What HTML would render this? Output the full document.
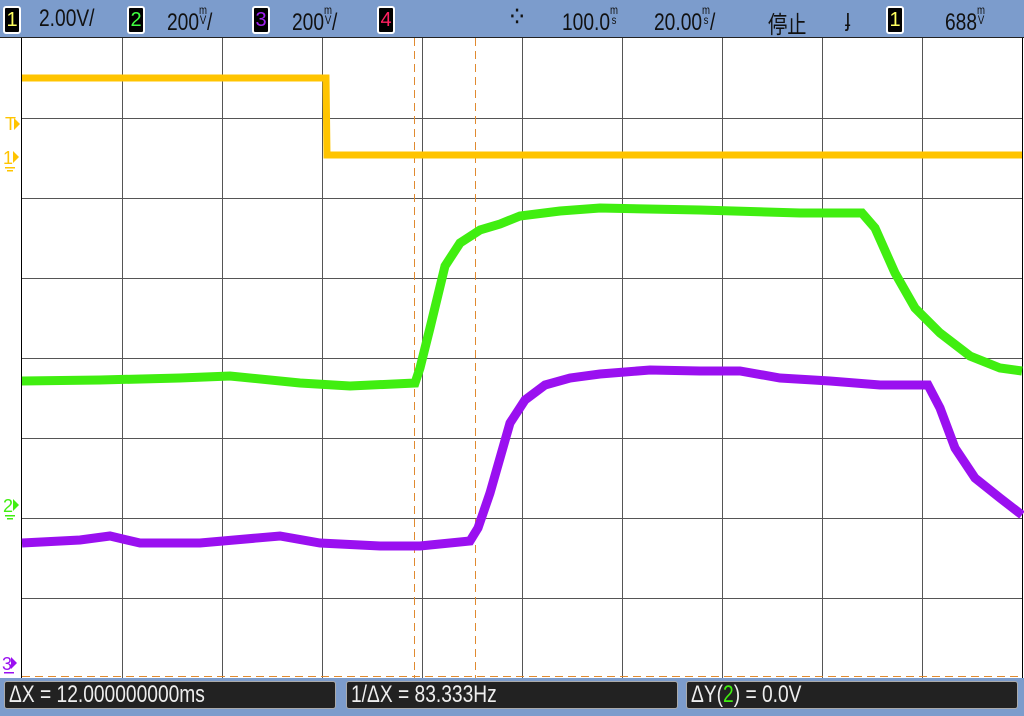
<!DOCTYPE html><html><head><meta charset="utf-8"><style>
body{margin:0;width:1024px;height:716px;overflow:hidden;background:#fff;font-family:"Liberation Sans","Noto Sans CJK JP",sans-serif}
.top{position:absolute;left:0;top:0;width:1024px;height:37px;background:#7c9ccc;border-bottom:1px solid #222}
.t{position:absolute;top:5px;font-size:24px;color:#111;transform:scaleX(.8);transform-origin:left;white-space:nowrap}
.t small{font-size:12px;display:inline-block;line-height:10px;vertical-align:6px;text-align:center}
.b{position:absolute;top:6px;width:14px;height:24px;background:#000;border:2px solid #fff;border-radius:3px;font-size:20px;text-align:center;line-height:24px}
.bot{position:absolute;left:0;top:678px;width:1024px;height:38px;background:#7c9ccc}
.box{position:absolute;top:3px;height:26px;background:#222;border:1px solid #aaa;border-radius:3px;color:#eee;font-size:24px;line-height:26px;padding-left:4px}
.box span{display:inline-block;transform:scaleX(.8);transform-origin:left;white-space:nowrap}
</style></head><body>
<div class="top">
<div class="b" style="left:3px;color:#ffff60">1</div><div class="t" style="left:39px">2.00V/</div>
<div class="b" style="left:127px;color:#40ff40">2</div><div class="t" style="left:167px">200<small>m<br>V</small>/</div>
<div class="b" style="left:252px;color:#a020f0">3</div><div class="t" style="left:292px">200<small>m<br>V</small>/</div>
<div class="b" style="left:377px;color:#ff2060">4</div>
<div class="t" style="left:507px;top:0px;font-size:30px">⁘</div>
<div class="t" style="left:562px">100.0<small>m<br>s</small></div>
<div class="t" style="left:654px">20.00<small>m<br>s</small>/</div>
<div class="t" style="left:768px">停止</div>
<div class="t" style="left:845px">ɟ</div>
<div class="b" style="left:886px;color:#ffff60">1</div>
<div class="t" style="left:945px">688<small>m<br>V</small></div>
</div>
<svg style="position:absolute;left:0;top:38px" width="1024" height="640">
<g stroke="#555" stroke-width="1">
<line x1="21.5" y1="0" x2="21.5" y2="640" stroke="#000"/>
<line x1="122.5" y1="0" x2="122.5" y2="640"/><line x1="222.5" y1="0" x2="222.5" y2="640"/><line x1="322.5" y1="0" x2="322.5" y2="640"/><line x1="422.5" y1="0" x2="422.5" y2="640"/><line x1="522.5" y1="0" x2="522.5" y2="640"/><line x1="622.5" y1="0" x2="622.5" y2="640"/><line x1="722.5" y1="0" x2="722.5" y2="640"/><line x1="822.5" y1="0" x2="822.5" y2="640"/><line x1="922.5" y1="0" x2="922.5" y2="640"/><line x1="1022.5" y1="0" x2="1022.5" y2="640" stroke="#000"/>
<line x1="22" y1="80.5" x2="1022" y2="80.5"/><line x1="22" y1="160.5" x2="1022" y2="160.5"/><line x1="22" y1="240.5" x2="1022" y2="240.5"/><line x1="22" y1="320.5" x2="1022" y2="320.5"/><line x1="22" y1="400.5" x2="1022" y2="400.5"/><line x1="22" y1="480.5" x2="1022" y2="480.5"/><line x1="22" y1="560.5" x2="1022" y2="560.5"/>
</g>
<g stroke="#e08a30" stroke-width="1" stroke-dasharray="8,5"><line x1="414.5" y1="0" x2="414.5" y2="640"/><line x1="475.5" y1="0" x2="475.5" y2="640"/><line x1="22" y1="638.5" x2="1022" y2="638.5"/></g>
<polyline fill="none" stroke="#ffc400" stroke-width="7" points="22,40 326,40 327,117 1022,117"/>
<polyline fill="none" stroke="#40ee10" stroke-width="9" points="22,343 100,342 180,340 230,338 300,345 350,348 415,345 420,330 430,290 445,228 460,205 480,192 500,186 520,178 560,173 600,170 700,172 800,175 862,175 875,190 895,235 915,270 940,295 970,318 1000,330 1022,333"/>
<polyline fill="none" stroke="#9a10f0" stroke-width="9" points="22,505 80,502 110,498 140,505 200,505 280,498 320,505 380,508 420,508 470,503 478,490 490,455 500,420 510,385 525,362 545,347 570,340 600,336 650,332 700,333 740,333 780,340 830,343 880,347 928,347 940,370 955,410 975,440 1000,460 1022,477"/>
<g fill="#ffc400" font-size="18px"><text x="5" y="92">T</text><polygon points="14,80 20,86 14,92"/><text x="3" y="126">1</text><polygon points="13,113 19,119 13,125"/><rect x="5" y="129" width="10" height="1.5"/><rect x="7" y="132" width="6" height="1.5"/></g>
<g fill="#40ee10" font-size="18px"><text x="3" y="474">2</text><polygon points="13,461 19,467 13,473"/><rect x="5" y="477" width="10" height="1.5"/><rect x="7" y="480" width="6" height="1.5"/></g>
<g fill="#9a10f0" font-size="18px"><text x="2" y="632">3</text><polygon points="11,619 17,625 11,631"/><rect x="4" y="634" width="10" height="1.5"/></g>
</svg>
<div class="bot">
<div class="box" style="left:4px;width:326px"><span>ΔX = 12.000000000ms</span></div>
<div class="box" style="left:346px;width:326px"><span>1/ΔX = 83.333Hz</span></div>
<div class="box" style="left:686px;width:326px"><span>ΔY(<b style="color:#40ee10;font-weight:normal">2</b>) = 0.0V</span></div>
</div>
</body></html>
